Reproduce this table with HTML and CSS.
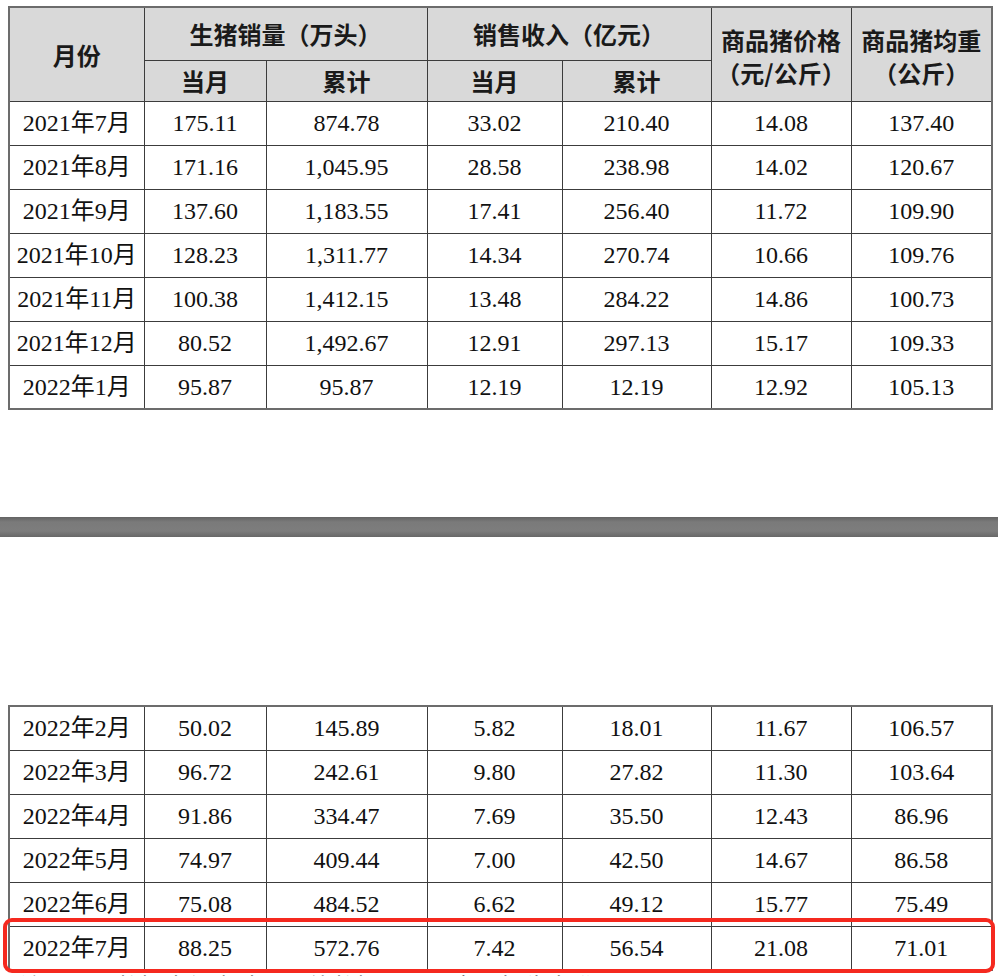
FILE: index.html
```html
<!DOCTYPE html>
<html lang="zh-CN">
<head>
<meta charset="utf-8">
<title>生猪销售情况</title>
<link rel="stylesheet" href="styles.css">
</head>
<body>
<div class="page">
  <table class="grid">
    <colgroup>
      <col class="c1"><col class="c2"><col class="c3"><col class="c4"><col class="c5"><col class="c6"><col class="c7">
    </colgroup>
    <thead>
      <tr class="h1">
        <th rowspan="2">月份</th>
        <th colspan="2">生猪销量（万头）</th>
        <th colspan="2">销售收入（亿元）</th>
        <th rowspan="2" class="two">商品猪价格<br>（元/公斤）</th>
        <th rowspan="2" class="two">商品猪均重<br>（公斤）</th>
      </tr>
      <tr class="h2">
        <th>当月</th><th>累计</th><th>当月</th><th>累计</th>
      </tr>
    </thead>
    <tbody>
      <tr><td>2021年7月</td><td>175.11</td><td>874.78</td><td>33.02</td><td>210.40</td><td>14.08</td><td>137.40</td></tr>
      <tr><td>2021年8月</td><td>171.16</td><td>1,045.95</td><td>28.58</td><td>238.98</td><td>14.02</td><td>120.67</td></tr>
      <tr><td>2021年9月</td><td>137.60</td><td>1,183.55</td><td>17.41</td><td>256.40</td><td>11.72</td><td>109.90</td></tr>
      <tr><td>2021年10月</td><td>128.23</td><td>1,311.77</td><td>14.34</td><td>270.74</td><td>10.66</td><td>109.76</td></tr>
      <tr><td>2021年11月</td><td>100.38</td><td>1,412.15</td><td>13.48</td><td>284.22</td><td>14.86</td><td>100.73</td></tr>
      <tr><td>2021年12月</td><td>80.52</td><td>1,492.67</td><td>12.91</td><td>297.13</td><td>15.17</td><td>109.33</td></tr>
      <tr><td>2022年1月</td><td>95.87</td><td>95.87</td><td>12.19</td><td>12.19</td><td>12.92</td><td>105.13</td></tr>
    </tbody>
  </table>

  <div class="page-break"></div>

  <div class="second">
    <table class="grid">
      <colgroup>
        <col class="c1"><col class="c2"><col class="c3"><col class="c4"><col class="c5"><col class="c6"><col class="c7">
      </colgroup>
      <tbody>
        <tr><td>2022年2月</td><td>50.02</td><td>145.89</td><td>5.82</td><td>18.01</td><td>11.67</td><td>106.57</td></tr>
        <tr><td>2022年3月</td><td>96.72</td><td>242.61</td><td>9.80</td><td>27.82</td><td>11.30</td><td>103.64</td></tr>
        <tr><td>2022年4月</td><td>91.86</td><td>334.47</td><td>7.69</td><td>35.50</td><td>12.43</td><td>86.96</td></tr>
        <tr><td>2022年5月</td><td>74.97</td><td>409.44</td><td>7.00</td><td>42.50</td><td>14.67</td><td>86.58</td></tr>
        <tr><td>2022年6月</td><td>75.08</td><td>484.52</td><td>6.62</td><td>49.12</td><td>15.77</td><td>75.49</td></tr>
        <tr><td>2022年7月</td><td>88.25</td><td>572.76</td><td>7.42</td><td>56.54</td><td>21.08</td><td>71.01</td></tr>
      </tbody>
    </table>
    <div class="highlight"></div>
    <p class="note">注：以上数据未经审计，最终数据以公司定期报告为准。</p>
  </div>
</div>
</body>
</html>
```

FILE: styles.css
```css
html, body {
  margin: 0;
  padding: 0;
  height: 976px;
  overflow: hidden;
  background: #ffffff;
}

.page {
  padding: 6px 0 0 8px;
  font-family: "Liberation Serif", "Noto Sans CJK SC", serif;
  color: #111;
}

.grid {
  border-collapse: collapse;
  table-layout: fixed;
  width: 983px;
  border: 2px solid #6c6c6c;
  font-size: 24px;
}

.c1 { width: 135px; }
.c2 { width: 122px; }
.c3 { width: 161px; }
.c4 { width: 135px; }
.c5 { width: 149px; }
.c6 { width: 140px; }
.c7 { width: 141px; }

.grid th,
.grid td {
  border: 1.5px solid #3c3c3c;
  padding: 0;
  text-align: center;
  vertical-align: middle;
  white-space: nowrap;
}

.grid th {
  background: #d9d9d9;
  font-family: "Noto Sans CJK SC", sans-serif;
  font-weight: 700;
  font-size: 24px;
  color: #1a1a1a;
  line-height: 33px;
}

.grid .h1 { height: 53px; }
.grid .h2 { height: 41px; }

.grid th.two {
  line-height: 33px;
  padding-top: 4px;
}

.grid tbody tr { height: 44px; }

.grid td {
  line-height: 26px;
}

.page-break {
  height: 20px;
  margin: 107px -8px 168px -8px;
  background: linear-gradient(#646464, #7a7a7a 25%, #7d7d7d 70%, #686868);
}

.second {
  position: relative;
}

.highlight {
  position: absolute;
  left: -5px;
  top: 213px;
  width: 992px;
  height: 55px;
  box-sizing: border-box;
  border: 4px solid #f5291f;
  border-radius: 9px;
}

.note {
  margin: 2px 0 0 12px;
  font-size: 24px;
  line-height: 30px;
  font-family: "Liberation Serif", "Noto Sans CJK SC", serif;
}
```
